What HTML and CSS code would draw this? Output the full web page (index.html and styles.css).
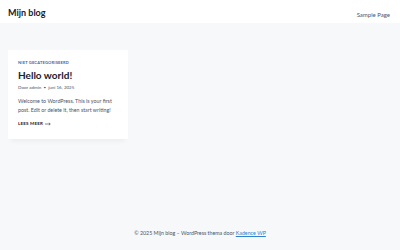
FILE: index.html
```html
<!DOCTYPE html>
<html lang="nl">
<head>
<meta charset="utf-8">
<title>Mijn blog</title>
<link rel="stylesheet" href="styles.css">
</head>
<body>
<div class="site">
  <header class="header">
    <div class="brand">Mijn blog</div>
    <nav class="nav"><a href="#">Sample Page</a></nav>
  </header>
  <main class="main">
    <div class="grid">
      <article class="card">
        <div class="cat">NIET GECATEGORISEERD</div>
        <h2 class="title">Hello world!</h2>
        <div class="meta">Door admin <span class="dot">•</span> juni 16, 2025</div>
        <p class="excerpt">Welcome to WordPress. This is your first post. Edit or delete it, then start writing!</p>
        <a class="more" href="#">LEES MEER <svg class="arrow" viewBox="0 0 10 6" width="6" height="4"><path d="M0 3H8.5M6.5 1L8.8 3L6.5 5" fill="none" stroke="#1a202c" stroke-width="0.9"/></svg></a>
      </article>
    </div>
  </main>
  <footer class="footer">
    <p>© 2025 Mijn blog – WordPress thema door <a href="#">Kadence WP</a></p>
  </footer>
</div>
</body>
</html>
```
FILE: styles.css
```css
* { box-sizing: border-box; }
html, body { margin: 0; padding: 0; }
body {
  background: #f7f8fa;
  font-family: Lato, "Noto Sans", sans-serif;
  color: #2d3748;
}
.site {
  min-height: 250px;
  display: flex;
  flex-direction: column;
}
.header {
  background: #fff;
  height: 23px;
  display: flex;
  align-items: center;
  justify-content: space-between;
  padding: 1px 10px 0 8px;
}
.brand {
  font-size: 9px;
  font-weight: 700;
  color: #1a202c;
}
.nav { margin-top: -3px; }
.nav a {
  font-size: 6px;
  color: #4a5568;
  text-decoration: none;
}
.main {
  flex: 1;
  padding: 27px 8px 0;
}
.grid {
  display: grid;
  grid-template-columns: repeat(3, 1fr);
  gap: 12px;
}
.card {
  background: #fff;
  font-size: 5px;
  line-height: 6px;
  padding: 9.5px 10px 12px;
  box-shadow: 0 5px 5px -3px rgba(0,0,0,0.05);
}
.cat {
  font-size: 4px;
  font-weight: 700;
  color: #2b6cb0;
  letter-spacing: 0.2px;
  line-height: 6px;
}
.title {
  margin: 3px 0 0;
  font-size: 10px;
  line-height: 12px;
  font-weight: 700;
  color: #1a202c;
}
.meta {
  margin-top: 4.5px;
  font-size: 4.5px;
  line-height: 6px;
  color: #4a5568;
}
.dot { padding: 0 1px; }
.excerpt {
  margin: 5.5px 0 0;
  font-size: 5.3px;
  line-height: 9px;
  color: #4a5568;
}
.more {
  display: flex;
  width: fit-content;
  align-items: center;
  gap: 2px;
  margin-top: 6px;
  font-size: 4.5px;
  line-height: 6px;
  font-weight: 700;
  color: #1a202c;
  text-decoration: none;
  letter-spacing: 0.2px;
}
.footer {
  padding: 0 0 14px;
  text-align: center;
}
.footer p {
  margin: 0;
  font-size: 5.3px;
  color: #4a5568;
}
.footer a { color: #3182ce; }
```
